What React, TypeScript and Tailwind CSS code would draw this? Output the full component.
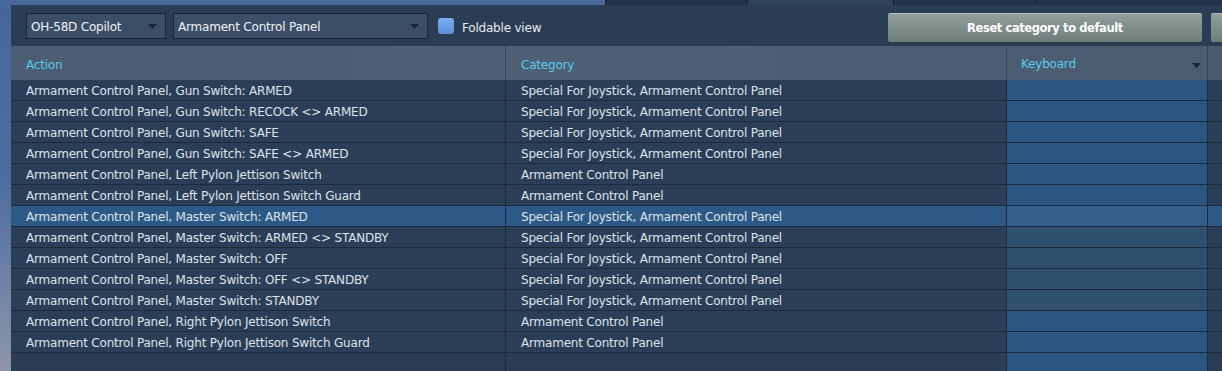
import React from 'react';

interface Binding {
  action: string;
  category: string;
}

const rows: Binding[] = [
  { action: 'Armament Control Panel, Gun Switch: ARMED', category: 'Special For Joystick, Armament Control Panel' },
  { action: 'Armament Control Panel, Gun Switch: RECOCK <> ARMED', category: 'Special For Joystick, Armament Control Panel' },
  { action: 'Armament Control Panel, Gun Switch: SAFE', category: 'Special For Joystick, Armament Control Panel' },
  { action: 'Armament Control Panel, Gun Switch: SAFE <> ARMED', category: 'Special For Joystick, Armament Control Panel' },
  { action: 'Armament Control Panel, Left Pylon Jettison Switch', category: 'Armament Control Panel' },
  { action: 'Armament Control Panel, Left Pylon Jettison Switch Guard', category: 'Armament Control Panel' },
  { action: 'Armament Control Panel, Master Switch: ARMED', category: 'Special For Joystick, Armament Control Panel' },
  { action: 'Armament Control Panel, Master Switch: ARMED <> STANDBY', category: 'Special For Joystick, Armament Control Panel' },
  { action: 'Armament Control Panel, Master Switch: OFF', category: 'Special For Joystick, Armament Control Panel' },
  { action: 'Armament Control Panel, Master Switch: OFF <> STANDBY', category: 'Special For Joystick, Armament Control Panel' },
  { action: 'Armament Control Panel, Master Switch: STANDBY', category: 'Special For Joystick, Armament Control Panel' },
  { action: 'Armament Control Panel, Right Pylon Jettison Switch', category: 'Armament Control Panel' },
  { action: 'Armament Control Panel, Right Pylon Jettison Switch Guard', category: 'Armament Control Panel' },
];

const SELECTED = 6;

const Caret = ({ className = '' }: { className?: string }) => (
  <svg width="9" height="5" viewBox="0 0 9 5" className={className}>
    <path d="M0 0h9L4.5 5z" fill="#1c2633" />
  </svg>
);

const Dropdown = ({ label, width }: { label: string; width: string }) => (
  <div
    className={`${width} h-[26px] flex items-center justify-between pl-[4px] pr-[8px] bg-[#3a4f67] border border-[#1b2736] text-[12px] tracking-[-0.2px] text-[#eef1f5]`}
  >
    <span className="pt-[1px]">{label}</span>
    <Caret />
  </div>
);

const App = () => {
  return (
    <div
      className="w-[1222px] h-[371px] overflow-hidden flex flex-col bg-[#2a3d55]"
      style={{ fontFamily: '"DejaVu Sans", Verdana, sans-serif' }}
    >
      {/* top tab strip */}
      <div className="h-[5px] flex shrink-0">
        <div className="w-[605px] bg-[#46699a]" />
        <div className="w-[143px] bg-[#22344a] border-x border-[#15202d]" />
        <div className="w-[145px] bg-[#2d4157]" />
        <div className="w-[144px] bg-[#22344a] border-x border-[#15202d]" />
        <div className="flex-1 bg-[#22344a]" />
      </div>

      <div className="flex flex-1 min-h-0">
        {/* sky behind the window */}
        <div className="w-[11px] bg-gradient-to-b from-[#44679a] via-[#4f6e9f] to-[#8d96aa]" />

        <div className="flex-1 flex flex-col bg-[#2a3d55]">
          {/* toolbar */}
          <div className="h-[41px] flex items-start pt-[8px] pl-[15px] shrink-0">
            <Dropdown label="OH-58D Copilot" width="w-[140px]" />
            <div className="w-[7px]" />
            <Dropdown label="Armament Control Panel" width="w-[255px]" />
            <div className="ml-[10px] mt-[5px] w-[16px] h-[16px] rounded-[3px] bg-gradient-to-b from-[#7aaef0] to-[#5a8fd8]" />
            <span className="ml-[8px] mt-[6px] text-[12px] tracking-[-0.2px] text-[#e6eaef]">Foldable view</span>
            <div className="ml-auto flex">
              <button className="w-[314px] h-[29px] pt-[1px] rounded-[2px] bg-gradient-to-b from-[#919f9d] to-[#6c7e7a] border-t border-[#b4c0be] text-[11.5px] tracking-[-0.4px] font-bold text-white">
                Reset category to default
              </button>
              <div className="ml-[9px] w-[11px] h-[29px] rounded-l-[2px] bg-gradient-to-b from-[#919f9d] to-[#6c7e7a] border-t border-[#b4c0be]" />
            </div>
          </div>

          {/* header */}
          <div className="h-[34px] flex shrink-0 bg-gradient-to-r from-[#4b5d73] via-[#4e6076] to-[#4a5b70] text-[12px] tracking-[-0.2px] text-[#5ccbec]">
            <div className="w-[494px] pl-[15px] pt-[3px] flex items-center">Action</div>
            <div className="w-[501px] pl-[15px] pt-[3px] flex items-center border-l border-[#33455b]">Category</div>
            <div className="w-[201px] pl-[14px] pr-[6px] pt-[2px] flex items-center justify-between border-l border-[#33455b]">
              <span>Keyboard</span>
              <Caret className="mt-[2px]" />
            </div>
            <div className="flex-1 border-l border-[#33455b]" />
          </div>

          {/* rows */}
          <div className="flex-1 flex flex-col text-[12px] tracking-[-0.2px] text-[#dde3ea]">
            {rows.map((row, i) => {
              const sel = i === SELECTED;
              return (
                <div
                  key={i}
                  className={`h-[21px] flex shrink-0 border-b border-[#1d2a3b] ${
                    sel ? 'bg-[#2d5986]' : 'bg-[#2b3e57]'
                  }`}
                >
                  <div className="w-[494px] pl-[15px] pt-[1px] flex items-center whitespace-nowrap">{row.action}</div>
                  <div className="w-[501px] pl-[15px] pt-[1px] flex items-center whitespace-nowrap border-l border-[#1d2a3b]">
                    {row.category}
                  </div>
                  <div
                    className={`w-[201px] border-l border-[#1d2a3b] ${
                      sel
                        ? 'bg-[#325f8c]'
                        : i >= 7 && i <= 10
                        ? 'bg-[#30506f]'
                        : 'bg-[#2c5682]'
                    }`}
                  />
                  <div className="flex-1 border-l border-[#1d2a3b]" />
                </div>
              );
            })}
            <div className="flex-1 flex">
              <div className="w-[494px]" />
              <div className="w-[501px] border-l border-[#1d2a3b]" />
              <div className="w-[201px] border-l border-[#1d2a3b] bg-[#2c5682]" />
              <div className="flex-1 border-l border-[#1d2a3b]" />
            </div>
          </div>
        </div>
      </div>
    </div>
  );
};

export default App;
